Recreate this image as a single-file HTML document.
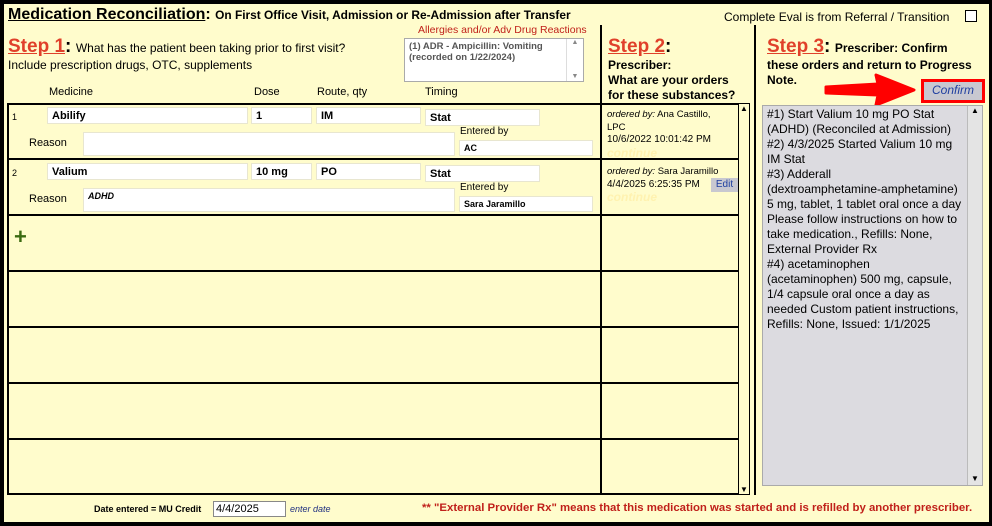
<!DOCTYPE html>
<html><head><meta charset="utf-8"><style>
*{margin:0;padding:0;box-sizing:border-box}
body{width:992px;height:526px;background:#000;position:relative;overflow:hidden;font-family:"Liberation Sans",Arial,sans-serif;color:#000}
#pg{position:absolute;left:4px;top:4px;width:985px;height:518px;background:#fffccc}
.a{position:absolute;white-space:nowrap}
.in{position:absolute;background:#fff;border:1px solid #e8e6d0;font-size:11px;font-weight:bold;padding:2px 4px}
.step{color:#e0402a;font-weight:bold;font-size:19px;text-decoration:underline}
.hl{position:absolute;background:#000;height:2px}
.vl{position:absolute;background:#000;width:2px}
.sm{font-size:11px}
.cont{color:#fff2b0;font-style:italic;font-weight:bold;font-size:12px}
</style></head><body><div id="pg"></div>
<div class="a" style="left:8px;top:6px;font-size:16px;font-weight:bold"><u>Medication Reconciliation</u>: <span style="font-size:11.9px">On First Office Visit, Admission or Re-Admission after Transfer</span></div>
<div class="a" style="left:724px;top:10px;font-size:12px">Complete Eval is from Referral / Transition</div>
<div class="a" style="left:965px;top:10px;width:12px;height:12px;border:1px solid #000;background:#fff"></div>
<div class="a" style="left:418px;top:24px;font-size:10.5px;color:#c0201a">Allergies and/or Adv Drug Reactions</div>
<div class="a" style="left:404px;top:38px;width:180px;height:44px;background:#fff;border:1px solid #aaa;font-size:9.5px;font-weight:bold;color:#555;padding:2px 20px 2px 4px;line-height:11px;white-space:normal">(1) ADR - Ampicillin: Vomiting (recorded on 1/22/2024)</div>
<div class="a" style="left:566px;top:39px;width:17px;height:42px;border-left:1px solid #ddd;font-size:7px;color:#888;text-align:center">▲<div style="position:absolute;bottom:1px;width:16px">▼</div></div>
<div class="a" style="left:8px;top:36px"><span class="step">Step 1</span><b style="font-size:19px">:</b> <span style="font-size:12px">What has the patient been taking prior to first visit?</span></div>
<div class="a" style="left:8px;top:58px;font-size:12px">Include prescription drugs, OTC, supplements</div>
<div class="a sm" style="left:49px;top:86px">Medicine</div>
<div class="a sm" style="left:254px;top:86px">Dose</div>
<div class="a sm" style="left:317px;top:86px">Route, qty</div>
<div class="a sm" style="left:425px;top:86px">Timing</div>
<div class="vl" style="left:600px;top:25px;height:470px"></div>
<div class="vl" style="left:754px;top:25px;height:470px"></div>
<div class="a" style="left:608px;top:36px"><span class="step">Step 2</span><b style="font-size:19px">:</b></div>
<div class="a" style="left:608px;top:58px;font-size:12px;font-weight:bold;line-height:15px">Prescriber:<br>What are your orders<br>for these substances?</div>
<div class="a" style="left:767px;top:36px"><span class="step">Step 3</span><b style="font-size:19px">:</b> <b style="font-size:12px">Prescriber: Confirm</b></div>
<div class="a" style="left:767px;top:58px;font-size:12px;font-weight:bold;line-height:15px">these orders and return to Progress<br>Note.</div>
<svg class="a" style="left:820px;top:72px" width="100" height="34"><path d="M6 15 L58 12 L56 3 L94 18 L56 33 L58 23 L6 21 Z" fill="#f00" stroke="#f00" stroke-linejoin="round" stroke-width="3"/></svg>
<div class="a" style="left:921px;top:79px;width:64px;height:24px;background:#f00;padding:3px"><div style="background:#c8c8d0;height:18px;color:#2040a0;font-style:italic;font-size:12px;text-align:center;line-height:17px">Confirm</div></div>
<div class="a" style="left:762px;top:105px;width:221px;height:381px;background:#dcdbe0;border:1px solid #aaa;font-size:12px;line-height:15px;padding:1px 16px 0 4px;white-space:normal">#1) Start Valium 10 mg PO Stat (ADHD) (Reconciled at Admission)<br>#2) 4/3/2025 Started Valium 10 mg IM Stat<br>#3) Adderall <span style="white-space:nowrap">(dextroamphetamine‑amphetamine)</span> 5 mg, tablet, 1 tablet oral once a day Please follow instructions on how to take medication., Refills: None, External Provider Rx<br>#4) acetaminophen<br>(acetaminophen) 500 mg, capsule,<br>1/4 capsule oral once a day as<br>needed Custom patient instructions,<br>Refills: None, Issued: 1/1/2025</div>
<div class="a" style="left:967px;top:106px;width:15px;height:379px;border-left:1px solid #bbb;background:#e4e4e4;font-size:8px;text-align:center">▲<div style="position:absolute;bottom:2px;width:14px">▼</div></div>
<div class="a" style="left:7px;top:103px;width:732px;height:392px;border:2px solid #000;border-right:none"></div>
<div class="vl" style="left:600px;top:103px;height:392px"></div>
<div class="a" style="left:738px;top:103px;width:12px;height:392px;border:1px solid #000;background:#fffccc;font-size:8px;text-align:center">▲<div style="position:absolute;bottom:0;width:10px">▼</div></div>
<div class="hl" style="left:7px;top:158px;width:731px"></div>
<div class="hl" style="left:7px;top:214px;width:731px"></div>
<div class="hl" style="left:7px;top:270px;width:731px"></div>
<div class="hl" style="left:7px;top:326px;width:731px"></div>
<div class="hl" style="left:7px;top:382px;width:731px"></div>
<div class="hl" style="left:7px;top:438px;width:731px"></div>
<div class="a" style="left:12px;top:112px;font-size:9px">1</div>
<div class="in" style="left:47px;top:107px;width:201px;height:17px">Abilify</div>
<div class="in" style="left:251px;top:107px;width:61px;height:17px">1</div>
<div class="in" style="left:316px;top:107px;width:105px;height:17px">IM</div>
<div class="in" style="left:425px;top:109px;width:115px;height:17px">Stat</div>
<div class="a sm" style="left:29px;top:137px">Reason</div>
<div class="in" style="left:83px;top:132px;width:372px;height:24px"></div>
<div class="a" style="left:460px;top:126px;font-size:10px">Entered by</div>
<div class="in" style="left:459px;top:140px;width:134px;height:16px;font-size:9px">AC</div>
<div class="a" style="left:12px;top:168px;font-size:9px">2</div>
<div class="in" style="left:47px;top:163px;width:201px;height:17px">Valium</div>
<div class="in" style="left:251px;top:163px;width:61px;height:17px">10 mg</div>
<div class="in" style="left:316px;top:163px;width:105px;height:17px">PO</div>
<div class="in" style="left:425px;top:165px;width:115px;height:17px">Stat</div>
<div class="a sm" style="left:29px;top:193px">Reason</div>
<div class="in" style="left:83px;top:188px;width:372px;height:24px;font-style:italic;font-size:9px">ADHD</div>
<div class="a" style="left:460px;top:182px;font-size:10px">Entered by</div>
<div class="in" style="left:459px;top:196px;width:134px;height:16px;font-size:9px">Sara Jaramillo</div>
<div class="a" style="left:14px;top:226px;font-size:22px;font-weight:bold;color:#3a6a10;line-height:22px">+</div>
<div class="a" style="left:607px;top:109px;font-size:9.5px;line-height:12.5px"><i>ordered by:</i> Ana Castillo,<br>LPC<br><span style="font-size:10px">10/6/2022 10:01:42 PM</span><br><span class="cont">continue</span></div>
<div class="a" style="left:607px;top:165px;font-size:9.5px;line-height:13px"><i>ordered by:</i> Sara Jaramillo<br><span style="font-size:10px">4/4/2025 6:25:35 PM</span><br><span class="cont">continue</span></div>
<div class="a" style="left:711px;top:178px;width:27px;height:14px;background:#c8c8d0;color:#2040a0;font-size:10px;text-align:center;line-height:14px">Edit</div>
<div class="a" style="left:94px;top:504px;font-size:9px;font-weight:bold">Date entered = MU Credit</div>
<div class="a" style="left:213px;top:501px;width:73px;height:16px;background:#fff;border:1px solid #888;font-size:11px;padding:1px 2px">4/4/2025</div>
<div class="a" style="left:290px;top:504px;font-size:9px;font-style:italic;color:#203080">enter date</div>
<div class="a" style="left:422px;top:502px;font-size:11.4px;font-weight:bold;color:#c0201a">** "External Provider Rx" means that this medication was started and is refilled by another prescriber.</div>
</body></html>
